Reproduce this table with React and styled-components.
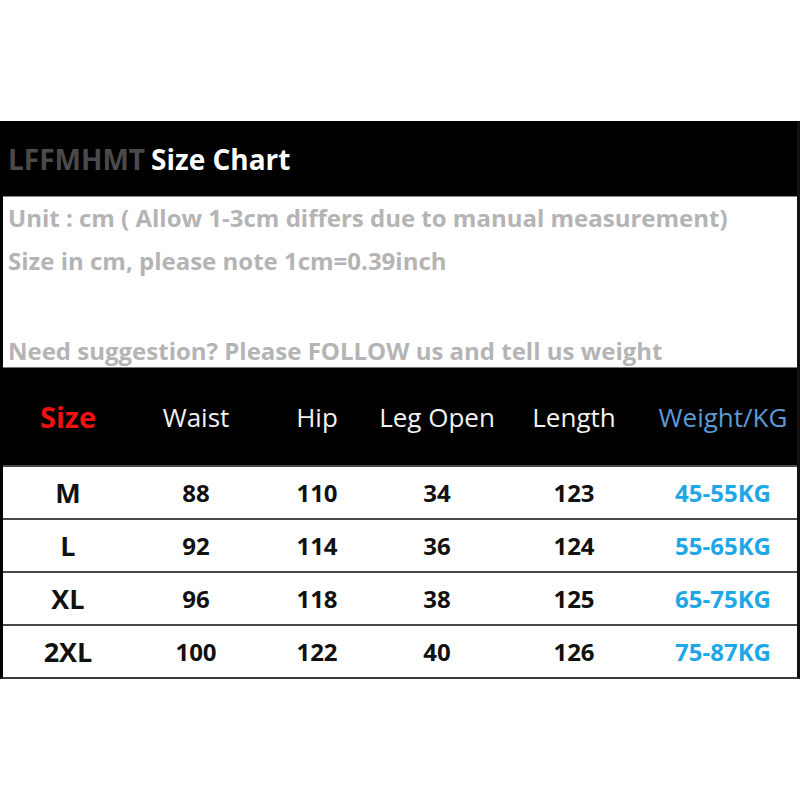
import React from "react";
import styled, { createGlobalStyle } from "styled-components";

const Global = createGlobalStyle`
  body {
    margin: 0;
    background: #fff;
    font-family: "Open Sans", "Liberation Sans", sans-serif;
  }
`;

const Page = styled.div`
  width: 800px;
  height: 800px;
  padding-top: 121px;
  box-sizing: border-box;
`;

const Chart = styled.div`
  width: 800px;
  box-sizing: border-box;
  border-left: 3px solid #000;
  border-right: 3px solid #111;
  border-bottom: 2px solid #3a3a3a;
`;

const TitleBar = styled.div`
  height: 75px;
  background: #000;
  display: flex;
  align-items: center;
  padding-left: 5px;
  font-size: 28px;
  font-weight: 700;
`;

const Brand = styled.span`
  color: #4a4a4a;
  margin-right: 6px;
`;

const Title = styled.span`
  color: #fff;
`;

const Notes = styled.div`
  height: 171px;
  box-sizing: border-box;
  border-top: 1px solid #888;
  padding: 4px 0 0 5px;
  display: flex;
  flex-direction: column;
  color: #b4b4b4;
  font-size: 24px;
  font-weight: 700;
`;

const Note = styled.div`
  height: ${(p) => p.h}px;
  line-height: ${(p) => p.h}px;
  white-space: nowrap;
  flex-shrink: 0;
`;

const cols = "130px 126px 116px 124px 150px 1fr";

const HeadRow = styled.div`
  height: 97px;
  background: #000;
  display: grid;
  grid-template-columns: ${cols};
  align-items: center;
  border-top: 1px solid #777;
`;

const HeadCell = styled.div`
  text-align: center;
  color: ${(p) => p.color || "#f2f2f2"};
  font-weight: ${(p) => (p.bold ? 700 : 400)};
  font-size: ${(p) => (p.bold ? "29px" : "26px")};
  white-space: nowrap;
`;

const Row = styled.div`
  height: 51px;
  display: grid;
  grid-template-columns: ${cols};
  align-items: center;
  border-top: 2px solid #4a4a4a;
`;

const Cell = styled.div`
  text-align: center;
  font-weight: 700;
  font-size: ${(p) => (p.big ? "27px" : "24px")};
  color: ${(p) => p.color || "#111"};
  white-space: nowrap;
`;

const rows = [
  ["M", "88", "110", "34", "123", "45-55KG"],
  ["L", "92", "114", "36", "124", "55-65KG"],
  ["XL", "96", "118", "38", "125", "65-75KG"],
  ["2XL", "100", "122", "40", "126", "75-87KG"],
];

export default function App() {
  return (
    <Page>
      <Global />
      <Chart>
        <TitleBar>
          <Brand>LFFMHMT</Brand>
          <Title>Size Chart</Title>
        </TitleBar>
        <Notes>
          <Note h={34}>Unit : cm ( Allow 1-3cm differs due to manual measurement)</Note>
          <Note h={52}>Size in cm, please note 1cm=0.39inch</Note>
          <Note h={48}></Note>
          <Note h={32}>Need suggestion? Please FOLLOW us and tell us weight</Note>
        </Notes>
        <HeadRow>
          <HeadCell bold color="#f01010">Size</HeadCell>
          <HeadCell>Waist</HeadCell>
          <HeadCell>Hip</HeadCell>
          <HeadCell>Leg Open</HeadCell>
          <HeadCell>Length</HeadCell>
          <HeadCell color="#5b9bd5">Weight/KG</HeadCell>
        </HeadRow>
        {rows.map((r) => (
          <Row key={r[0]}>
            <Cell big>{r[0]}</Cell>
            <Cell>{r[1]}</Cell>
            <Cell>{r[2]}</Cell>
            <Cell>{r[3]}</Cell>
            <Cell>{r[4]}</Cell>
            <Cell color="#1ea7e6">{r[5]}</Cell>
          </Row>
        ))}
      </Chart>
    </Page>
  );
}
